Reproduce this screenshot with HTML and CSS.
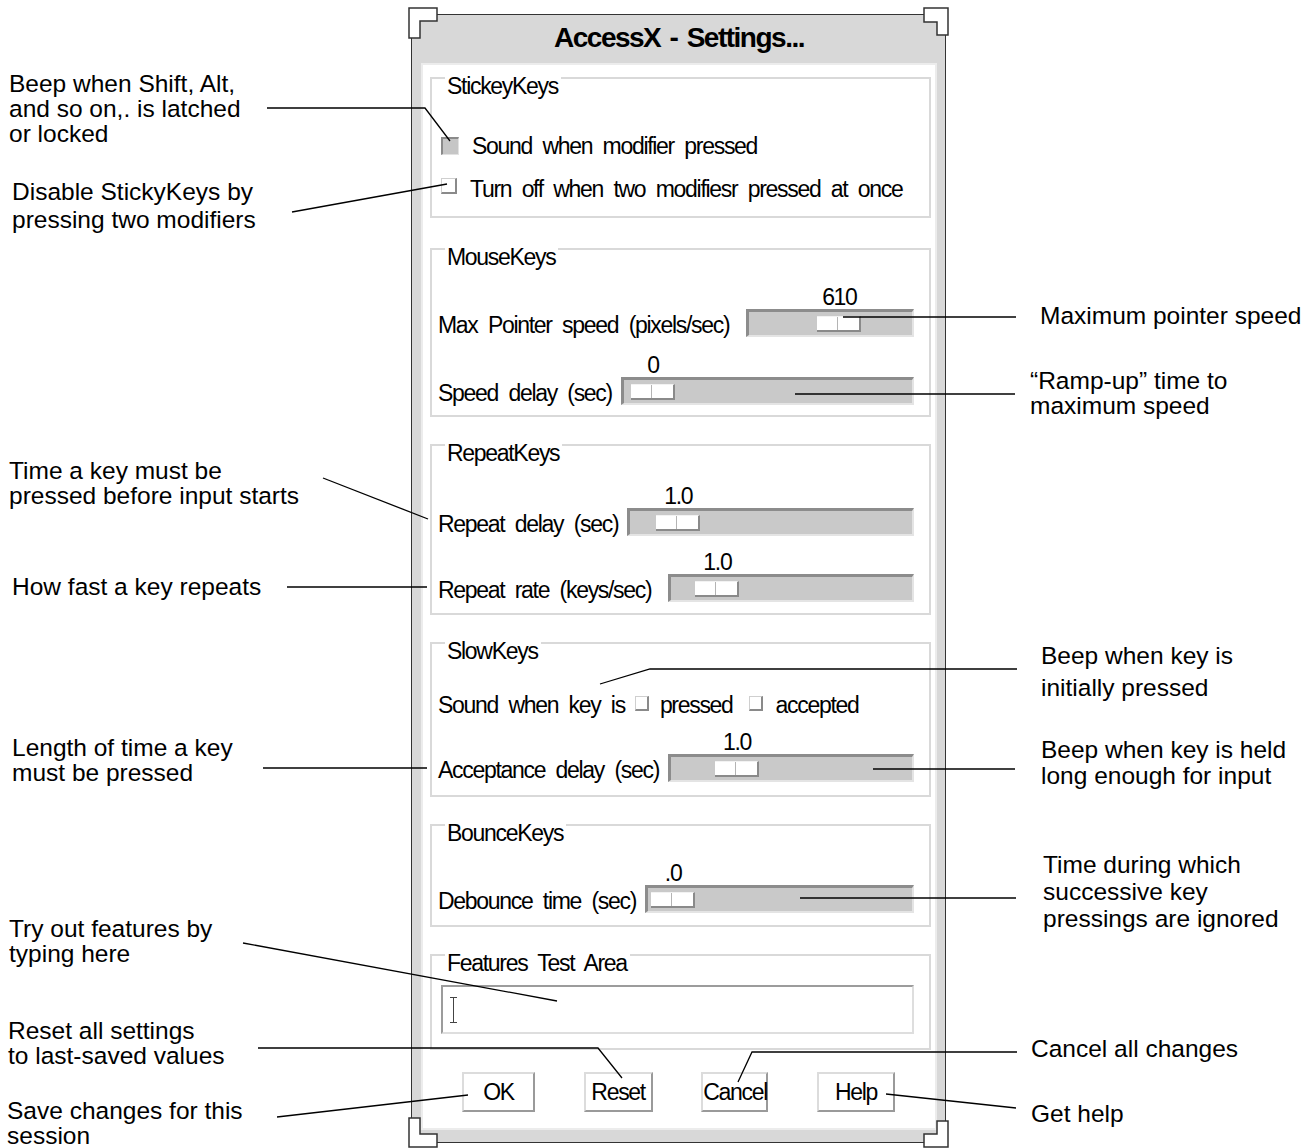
FILE: index.html
```html
<!DOCTYPE html>
<html lang="en">
<head>
  <meta charset="UTF-8">
  <meta name="viewport" content="width=device-width, initial-scale=1.0">
  <title>AccessX - Settings</title>
  <link rel="stylesheet" href="styles.css">
</head>
<body>
  <div class="page">
    <div class="notes notes-left">
      <p class="note note-a">Beep when Shift, Alt,<br>and so on,. is latched<br>or locked</p>
      <p class="note note-b">Disable StickyKeys by<br>pressing two modifiers</p>
      <p class="note note-c">Time a key must be<br>pressed before input starts</p>
      <p class="note note-d">How fast a key repeats</p>
      <p class="note note-e">Length of time a key<br>must be pressed</p>
      <p class="note note-f">Try out features by<br>typing here</p>
      <p class="note note-g">Reset all settings<br>to last-saved values</p>
      <p class="note note-h">Save changes for this<br>session</p>
    </div>

    <div class="window">
      <div class="title">AccessX - Settings...</div>
      <div class="panel">
        <div class="group sticky">
          <div class="group-head"><span>StickeyKeys</span></div>
          <div class="check-row"><span class="check pressed"></span>Sound when modifier pressed</div>
          <div class="check-row"><span class="check raised"></span>Turn off when two modifiesr pressed at once</div>
        </div>

        <div class="group mouse">
          <div class="group-head"><span>MouseKeys</span></div>
          <div class="slider-row">
            <span class="label">Max Pointer speed (pixels/sec)</span>
            <div class="scale wide" style="--pos: 71px">
              <span class="scale-value">610</span>
              <div class="trough"><span class="thumb"></span></div>
            </div>
          </div>
          <div class="slider-row">
            <span class="label">Speed delay (sec)</span>
            <div class="scale" style="--pos: 10px">
              <span class="scale-value">0</span>
              <div class="trough"><span class="thumb"></span></div>
            </div>
          </div>
        </div>

        <div class="group repeat">
          <div class="group-head"><span>RepeatKeys</span></div>
          <div class="slider-row">
            <span class="label">Repeat delay (sec)</span>
            <div class="scale" style="--pos: 29px">
              <span class="scale-value">1.0</span>
              <div class="trough"><span class="thumb"></span></div>
            </div>
          </div>
          <div class="slider-row">
            <span class="label">Repeat rate (keys/sec)</span>
            <div class="scale wide" style="--pos: 27px">
              <span class="scale-value">1.0</span>
              <div class="trough"><span class="thumb"></span></div>
            </div>
          </div>
        </div>

        <div class="group slow">
          <div class="group-head"><span>SlowKeys</span></div>
          <div class="check-row inline">
            <span>Sound when key is</span>
            <span class="check raised small"></span>
            <span>pressed</span>
            <span class="check raised small"></span>
            <span>accepted</span>
          </div>
          <div class="slider-row">
            <span class="label">Acceptance delay (sec)</span>
            <div class="scale" style="--pos: 47px">
              <span class="scale-value">1.0</span>
              <div class="trough"><span class="thumb"></span></div>
            </div>
          </div>
        </div>

        <div class="group bounce">
          <div class="group-head"><span>BounceKeys</span></div>
          <div class="slider-row">
            <span class="label">Debounce time (sec)</span>
            <div class="scale" style="--pos: 6px">
              <span class="scale-value">.0</span>
              <div class="trough"><span class="thumb"></span></div>
            </div>
          </div>
        </div>

        <div class="group test">
          <div class="group-head"><span>Features Test Area</span></div>
          <div class="test-field">
            <svg class="ibeam" width="9" height="26" viewBox="0 0 9 26"><path d="M1 0.5H8M4.5 0.5V25.5M1 25.5H8" fill="none" stroke="#444" stroke-width="1"/></svg>
          </div>
        </div>

        <div class="buttons">
          <button class="btn btn-ok">OK</button>
          <button class="btn btn-reset">Reset</button>
          <button class="btn btn-cancel">Cancel</button>
          <button class="btn btn-help">Help</button>
        </div>
      </div>
    </div>

    <div class="notes notes-right">
      <p class="note note-i">Maximum pointer speed</p>
      <p class="note note-j">“Ramp-up” time to<br>maximum speed</p>
      <p class="note note-k">Beep when key is<br>initially pressed</p>
      <p class="note note-l">Beep when key is held<br>long enough for input</p>
      <p class="note note-m">Time during which<br>successive key<br>pressings are ignored</p>
      <p class="note note-n">Cancel all changes</p>
      <p class="note note-o">Get help</p>
    </div>

    <!-- callout lines and window corner brackets -->
    <svg class="callouts" width="1315" height="1148" viewBox="0 0 1315 1148">
      <g fill="none" stroke="#000" stroke-width="1.3">
        <path d="M267 108H425L450 141"/>
        <path d="M292 212L447 184"/>
        <path d="M323 478L428 519"/>
        <path d="M287 587H427"/>
        <path d="M263 768H427"/>
        <path d="M243 943L557 1001"/>
        <path d="M258 1048H598L622 1078"/>
        <path d="M277 1117L468 1095"/>
        <path d="M843 317H1016"/>
        <path d="M795 394H1015"/>
        <path d="M600 684L650 669H1017"/>
        <path d="M873 769H1015"/>
        <path d="M800 898H1016"/>
        <path d="M738 1082L752 1052H1017"/>
        <path d="M886 1094L1016 1108"/>
      </g>
      <g fill="#fff" stroke="#333" stroke-width="1.5">
        <path d="M409 8H437V21H420V38H409Z"/>
        <path d="M948 8V35H937V22H924V8Z"/>
        <path d="M409 1147V1118H420V1134H437V1147Z"/>
        <path d="M948 1147H924V1134H937V1121H948Z"/>
      </g>
    </svg>
  </div>
</body>
</html>
```

FILE: styles.css
```css
body { margin: 0; background: #fff; color: #000; font-family: "Liberation Sans", Arial, sans-serif; }
.page { position: relative; display: flex; width: 1315px; height: 1148px; overflow: hidden; }

/* side notes */
.notes { display: flex; flex-direction: column; flex: none; font-size: 24.5px; }
.notes-left { width: 411px; }
.notes-right { width: 369px; }
.note { margin: 0; line-height: 25px; white-space: nowrap; }
.note-a { margin-top: 71px; padding-left: 9px; }
.note-b { margin-top: 32px; padding-left: 12px; line-height: 28px; }
.note-c { margin-top: 224px; padding-left: 9px; }
.note-d { margin-top: 66px; padding-left: 12px; }
.note-e { margin-top: 136px; padding-left: 12px; }
.note-f { margin-top: 131px; padding-left: 9px; }
.note-g { margin-top: 52px; padding-left: 8px; }
.note-h { margin-top: 30px; padding-left: 7px; }
.note-i { margin-top: 303px; padding-left: 94px; }
.note-j { margin-top: 40px; padding-left: 84px; }
.note-k { margin-top: 222px; padding-left: 95px; line-height: 32px; }
.note-l { margin-top: 33px; padding-left: 95px; line-height: 26px; }
.note-m { margin-top: 62px; padding-left: 97px; line-height: 27px; }
.note-n { margin-top: 104px; padding-left: 85px; }
.note-o { margin-top: 40px; padding-left: 85px; }

.callouts { position: absolute; left: 0; top: 0; pointer-events: none; }

/* dialog window: narrow type made from Arial metrics */
.window { flex: none; display: flex; flex-direction: column; box-sizing: border-box; width: 535px; height: 1129px; margin-top: 14px; padding: 0 8px 12px 9px; background: #d8d8d8; border: 1px solid #333; font-size: 23px; letter-spacing: -1.3px; word-spacing: 5.3px; }
.title { height: 48px; line-height: 46px; text-align: center; font-weight: bold; font-size: 28px; letter-spacing: -1.5px; word-spacing: 3px; }
.panel { flex: 1; display: flex; flex-direction: column; padding: 12px 4px 0 7px; background: #fff; border: 2px solid #ececec; }

.group { display: flex; flex-direction: column; padding: 0 15px 12px 6px; border: 2px solid #d9d9d9; border-top: 0; }
.group + .group { margin-top: 27px; }
.group-head { display: flex; height: 20px; margin: 0 -17px 0 -8px; }
.group-head::before { content: ""; width: 15px; border-top: 2px solid #d9d9d9; }
.group-head::after { content: ""; flex: 1; border-top: 2px solid #d9d9d9; }
.group-head span { padding: 0 3px 0 2px; line-height: 18px; white-space: nowrap; }

.sticky { gap: 19px; padding-bottom: 15px; margin-bottom: 3px; }
.sticky .group-head { margin-bottom: 18px; }
.mouse { gap: 18px; padding-bottom: 10px; }
.mouse .group-head { margin-bottom: 1px; }
.repeat { gap: 16px; padding-bottom: 11px; }
.repeat .group-head { margin-bottom: 6px; }
.slow { gap: 15px; padding-bottom: 13px; }
.slow .group-head { margin-bottom: 16px; }
.bounce { gap: 19px; padding-bottom: 12px; }
.test { gap: 11px; padding-bottom: 14px; }

/* checkboxes */
.check-row { display: flex; align-items: center; height: 24px; line-height: 24px; white-space: nowrap; }
.check { flex: none; box-sizing: border-box; margin: 0 13px 0 3px; }
.check.pressed { width: 18px; height: 18px; background: #c6c6c6; border-top: 2px solid #8a8a8a; border-left: 2px solid #8a8a8a; border-right: 1px solid #e2e2e2; border-bottom: 1px solid #e2e2e2; }
.check.raised { width: 16px; height: 16px; margin-bottom: 6px; background: #fff; border-top: 1px solid #cfcfcf; border-left: 1px solid #cfcfcf; border-right: 2px solid #8a8a8a; border-bottom: 2px solid #8a8a8a; }
.check.small { width: 14px; height: 15px; margin: 0 0 4px; }
.inline span + .check { margin-left: 10px; }
.inline .check + span { margin-left: 11px; }
.inline .check:nth-child(4) { margin-left: 16px; }
.inline .check:nth-child(4) + span { margin-left: 13px; }

/* scales */
.slider-row { display: flex; align-items: flex-end; }
.label { line-height: 24px; white-space: nowrap; }
.scale { flex: 1; display: flex; flex-direction: column; margin-left: 9px; }
.scale.wide { margin-left: 17px; }
.scale-value { width: 44px; margin-left: var(--pos); line-height: 20px; text-align: center; }
.trough { display: flex; align-items: center; box-sizing: border-box; height: 28px; margin-top: 2px; background: #c9c9c9; border-top: 3px solid #8c8c8c; border-left: 3px solid #8c8c8c; border-right: 2px solid #e4e4e4; border-bottom: 2px solid #e4e4e4; }
.thumb { box-sizing: border-box; width: 44px; height: 16px; margin-left: calc(var(--pos) - 3px); background: linear-gradient(to right, #fff 0 20px, #b4b4b4 20px 21px, #fff 21px); border-top: 1px solid #f2f2f2; border-right: 2px solid #8a8a8a; border-bottom: 2px solid #8a8a8a; }

/* test area */
.test-field { display: flex; align-items: center; box-sizing: border-box; height: 49px; margin-left: 3px; padding-left: 6px; border: 2px solid #dedede; border-top-color: #9c9c9c; border-left-color: #9c9c9c; }

/* buttons */
.buttons { display: flex; justify-content: space-between; margin-top: 22px; padding: 0 36px 0 32px; }
.btn { box-sizing: border-box; height: 40px; padding: 0; background: #fff; color: #000; border: 2px solid #dcdcdc; border-right-color: #9a9a9a; border-bottom-color: #9a9a9a; font: inherit; letter-spacing: inherit; line-height: 36px; text-align: center; }
.btn-ok { width: 73px; }
.btn-reset { width: 69px; }
.btn-cancel { width: 67px; }
.btn-help { width: 78px; }
```
